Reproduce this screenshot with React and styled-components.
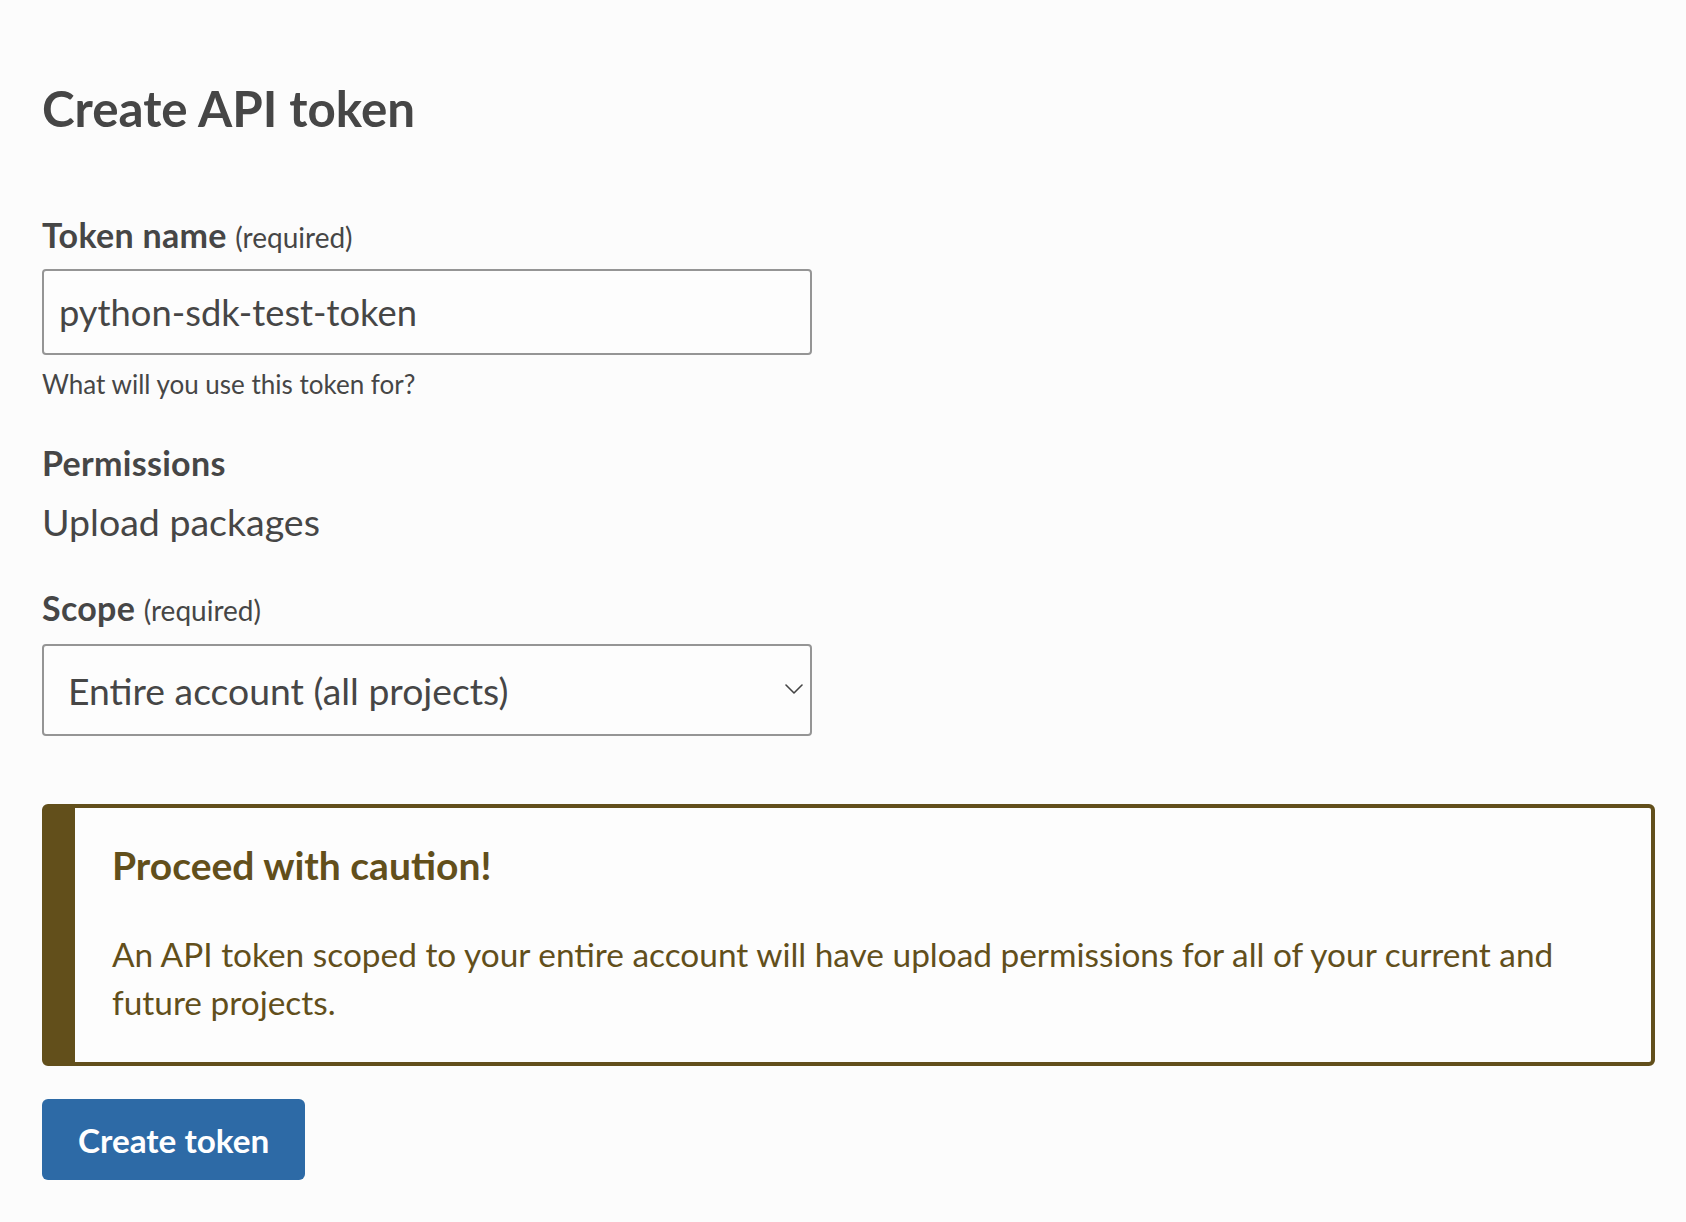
import React from "react";
import styled, { createGlobalStyle } from "styled-components";

const Global = createGlobalStyle`
  html, body {
    margin: 0;
    padding: 0;
    background: #fcfcfc;
  }
  body {
    font-family: Lato, "Liberation Sans", sans-serif;
    color: #464646;
  }
  * { box-sizing: border-box; }
`;

const Page = styled.main`
  padding: 78px 31px 40px 42px;
  display: flex;
  flex-direction: column;
  align-items: flex-start;
`;

const Title = styled.h1`
  margin: 0;
  font-size: 49.3px;
  line-height: 60px;
  font-weight: 700;
  color: #464646;
`;

const Form = styled.form`
  margin: 79px 0 0;
  display: flex;
  flex-direction: column;
  align-items: stretch;
  align-self: stretch;
`;

const Label = styled.label`
  display: block;
  margin-top: ${(p) => p.$top || 0}px;
  font-size: 34px;
  line-height: 36px;
  font-weight: 700;
  letter-spacing: 0.3px;
  color: #464646;
`;

const Req = styled.span`
  font-size: 28px;
  font-weight: 400;
  letter-spacing: 0;
`;

const TextInput = styled.input`
  display: block;
  width: 770px;
  height: 86px;
  margin-top: 14px;
  padding: 0 15px;
  border: 2px solid #959595;
  border-radius: 4px;
  background: #fdfdfd;
  font-family: inherit;
  font-size: 36.3px;
  color: #464646;
  outline: none;
`;

const Help = styled.p`
  margin: 13px 0 0;
  font-size: 26px;
  line-height: 32px;
  color: #464646;
`;

const Value = styled.p`
  margin: 18px 0 0;
  font-size: 37.5px;
  line-height: 46px;
  font-weight: 400;
  color: #464646;
`;

const SelectWrap = styled.div`
  position: relative;
  width: 770px;
  margin-top: 16px;
`;

const Select = styled.select`
  display: block;
  width: 100%;
  height: 92px;
  padding: 0 50px 0 24px;
  border: 2px solid #959595;
  border-radius: 4px;
  background: #fdfdfd;
  font-family: inherit;
  font-size: 37.3px;
  color: #464646;
  appearance: none;
  -webkit-appearance: none;
  outline: none;
`;

const Chevron = styled.svg`
  position: absolute;
  right: 9px;
  top: 50%;
  width: 18px;
  height: 10px;
  margin-top: -6px;
  pointer-events: none;
`;

const Callout = styled.section`
  margin-top: 68px;
  border: 4px solid #624f1b;
  border-left-width: 33px;
  border-radius: 6px;
  background: #fdfdfd;
  padding: 33px 60px 36px 37px;
  color: #624f1b;
`;

const CalloutTitle = styled.h3`
  margin: 0;
  font-size: 39px;
  line-height: 48px;
  font-weight: 700;
`;

const CalloutText = styled.p`
  margin: 41px 0 0;
  font-size: 33.4px;
  line-height: 48px;
  max-width: 1470px;
`;

const Button = styled.button`
  align-self: flex-start;
  margin-top: 33px;
  height: 81px;
  padding: 0 36px;
  border: none;
  border-radius: 6px;
  background: #2d6aa6;
  color: #ffffff;
  font-family: inherit;
  font-size: 33.3px;
  font-weight: 700;
  cursor: pointer;
`;

export default function App() {
  return (
    <>
      <Global />
      <Page>
        <Title>Create API token</Title>
        <Form onSubmit={(e) => e.preventDefault()}>
          <Label htmlFor="token-name">
            Token name <Req>(required)</Req>
          </Label>
          <TextInput id="token-name" defaultValue="python-sdk-test-token" />
          <Help>What will you use this token for?</Help>

          <Label as="div" $top={45}>Permissions</Label>
          <Value>Upload packages</Value>

          <Label htmlFor="scope" $top={45}>
            Scope <Req>(required)</Req>
          </Label>
          <SelectWrap>
            <Select id="scope" defaultValue="all">
              <option value="all">Entire account (all projects)</option>
            </Select>
            <Chevron viewBox="0 0 18 10" fill="none">
              <path d="M1 1 L9 9 L17 1" stroke="#444" strokeWidth="1.6" strokeLinecap="round" strokeLinejoin="round" />
            </Chevron>
          </SelectWrap>

          <Callout>
            <CalloutTitle>Proceed with caution!</CalloutTitle>
            <CalloutText>
              An API token scoped to your entire account will have upload permissions for all of your current and future projects.
            </CalloutText>
          </Callout>

          <Button type="submit">Create token</Button>
        </Form>
      </Page>
    </>
  );
}
